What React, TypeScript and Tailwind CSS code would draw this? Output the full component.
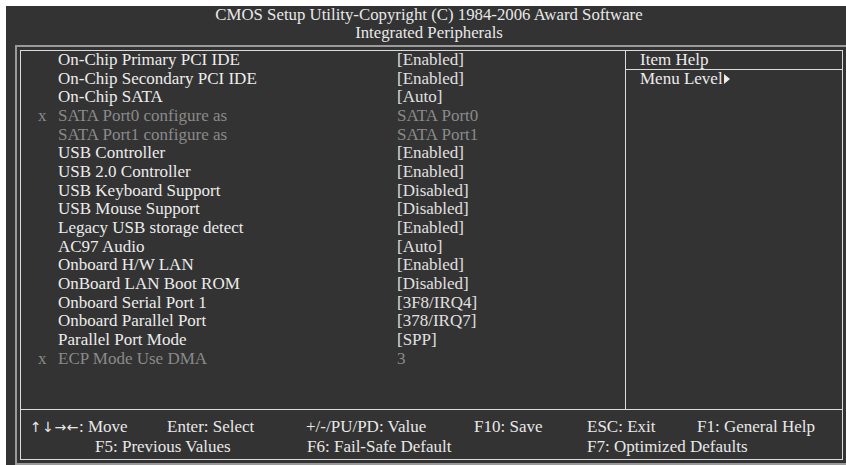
import React from "react";

type Row = { label: string; value: string; dim?: boolean; x?: boolean };

const rows: Row[] = [
  { label: "On-Chip Primary PCI IDE", value: "[Enabled]" },
  { label: "On-Chip Secondary PCI IDE", value: "[Enabled]" },
  { label: "On-Chip SATA", value: "[Auto]" },
  { label: "SATA Port0 configure as", value: "SATA Port0", dim: true, x: true },
  { label: "SATA Port1 configure as", value: "SATA Port1", dim: true },
  { label: "USB Controller", value: "[Enabled]" },
  { label: "USB 2.0 Controller", value: "[Enabled]" },
  { label: "USB Keyboard Support", value: "[Disabled]" },
  { label: "USB Mouse Support", value: "[Disabled]" },
  { label: "Legacy USB storage detect", value: "[Enabled]" },
  { label: "AC97 Audio", value: "[Auto]" },
  { label: "Onboard H/W LAN", value: "[Enabled]" },
  { label: "OnBoard LAN Boot ROM", value: "[Disabled]" },
  { label: "Onboard Serial Port 1", value: "[3F8/IRQ4]" },
  { label: "Onboard Parallel Port", value: "[378/IRQ7]" },
  { label: "Parallel Port Mode", value: "[SPP]" },
  { label: "ECP Mode Use DMA", value: "3", dim: true, x: true },
];

function SettingRow({ r }: { r: Row }) {
  return (
    <div className="flex h-[18.67px] leading-[18.67px] whitespace-nowrap pl-[17px]">
      <span className="w-[20px] text-[#8a8a8a]">{r.x ? "x" : ""}</span>
      <span className={r.dim ? "w-[339px] text-[#8a8a8a]" : "w-[339px] text-[#ececec]"}>{r.label}</span>
      <span className={r.dim ? "text-[#8a8a8a]" : "text-[#e0e0e0]"}>{r.value}</span>
    </div>
  );
}

export default function App() {
  return (
    <div
      className="w-[846px] h-[465px] bg-white pl-[6px] pt-[6px] overflow-hidden text-[17px]"
      style={{ fontFamily: '"Liberation Serif", "Times New Roman", serif' }}
    >
      <div className="h-full bg-[#333333] flex flex-col">
        {/* Title */}
        <div className="h-[39px] pl-[6px] text-center text-[#e8e8e8] text-[16.8px] leading-[18px]">
          <div>CMOS Setup Utility-Copyright (C) 1984-2006 Award Software</div>
          <div>Integrated Peripherals</div>
        </div>

        {/* Outer frame */}
        <div className="ml-[9px] border-t-2 border-l-2 border-b-2 border-[#9a9a9a] p-[3px]">
          <div className="border border-[#dcdcdc] h-[410px] flex flex-col">
            {/* Main + help */}
            <div className="flex h-[359px] border-b border-[#dcdcdc]">
              <div className="w-[605px] border-r border-[#dcdcdc]">
                {rows.map((r) => (
                  <SettingRow key={r.label} r={r} />
                ))}
              </div>
              <div className="flex-1 flex flex-col text-[#ececec]">
                <div className="h-[19px] leading-[18.67px] pl-[14px] border-b border-[#dcdcdc]">Item Help</div>
                <div className="leading-[18.67px] pl-[14px] flex items-center">
                  <span>Menu Level</span>
                  <svg width="6" height="10" viewBox="0 0 6 10" className="ml-[1px]">
                    <path d="M0 0 L6 5 L0 10 Z" fill="#ececec" />
                  </svg>
                </div>
              </div>
            </div>

            {/* Footer */}
            <div className="pt-[7px] text-[#e8e8e8] leading-[19px] whitespace-nowrap">
              <div className="flex pl-[9px]">
                <span className="w-[137px] flex items-baseline">
                  <span
                    className="text-[14px] tracking-[0.5px]"
                    style={{ fontFamily: '"DejaVu Sans", sans-serif' }}
                  >
                    ↑↓→←
                  </span>
                  <span>: Move</span>
                </span>
                <span className="w-[139px]">Enter: Select</span>
                <span className="w-[168px]">+/-/PU/PD: Value</span>
                <span className="w-[113px]">F10: Save</span>
                <span className="w-[110px]">ESC: Exit</span>
                <span>F1: General Help</span>
              </div>
              <div className="flex pl-[74px]">
                <span className="w-[212px]">F5: Previous Values</span>
                <span className="w-[280px]">F6: Fail-Safe Default</span>
                <span>F7: Optimized Defaults</span>
              </div>
            </div>
          </div>
        </div>
      </div>
    </div>
  );
}
